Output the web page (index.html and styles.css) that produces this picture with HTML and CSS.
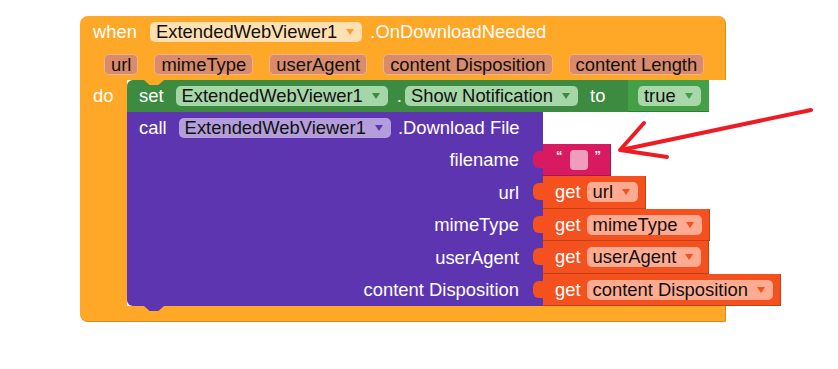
FILE: index.html
```html
<!DOCTYPE html>
<html lang="en">
<head>
  <meta charset="UTF-8">
  <meta name="viewport" content="width=device-width, initial-scale=1.0">
  <title>OnDownloadNeeded blocks</title>
  <link rel="stylesheet" href="styles.css">
</head>
<body>
  <div class="canvas">
    <div class="event">
      <div class="event-head">
        <div class="row">
          <span class="word">when</span>
          <span class="field field-event">ExtendedWebViewer1<i class="caret"></i></span>
          <span class="word">.OnDownloadNeeded</span>
        </div>
        <div class="row params">
          <span class="param">url</span>
          <span class="param">mimeType</span>
          <span class="param">userAgent</span>
          <span class="param">content Disposition</span>
          <span class="param">content Length</span>
        </div>
      </div>

      <div class="event-body">
        <div class="do-col"><span class="word">do</span></div>
        <div class="stack">
          <div class="set-row">
            <div class="set">
              <span class="word kw">set</span>
              <span class="field field-set">ExtendedWebViewer1<i class="caret"></i></span>
              <span class="word dot">.</span>
              <span class="field field-set">Show Notification<i class="caret"></i></span>
              <span class="word to">to</span>
            </div>
            <div class="logic">
              <span class="field field-logic">true<i class="caret"></i></span>
            </div>
          </div>

          <div class="call-row">
            <div class="call">
              <div class="call-head">
                <span class="word kw">call</span>
                <span class="field field-call">ExtendedWebViewer1<i class="caret"></i></span>
                <span class="word">.Download File</span>
              </div>
              <div class="slot">filename</div>
              <div class="slot tall">url</div>
              <div class="slot">mimeType</div>
              <div class="slot tall">userAgent</div>
              <div class="slot">content Disposition</div>
            </div>
            <div class="inputs">
              <div class="plug text-block">
                <span class="quote">&ldquo;</span><span class="blank"></span><span class="quote">&rdquo;</span>
              </div>
              <div class="plug get tall">
                <span class="word">get</span>
                <span class="field field-get">url<i class="caret"></i></span>
              </div>
              <div class="plug get">
                <span class="word">get</span>
                <span class="field field-get">mimeType<i class="caret"></i></span>
              </div>
              <div class="plug get tall">
                <span class="word">get</span>
                <span class="field field-get">userAgent<i class="caret"></i></span>
              </div>
              <div class="plug get">
                <span class="word">get</span>
                <span class="field field-get">content Disposition<i class="caret"></i></span>
              </div>
            </div>
          </div>
        </div>
      </div>

      <div class="event-foot"></div>
    </div>

    <!-- hand drawn pointer over the empty text block -->
    <svg class="arrow" width="838" height="369" viewBox="0 0 838 369">
      <g fill="none" stroke="#ed1c24" stroke-width="4" stroke-linecap="round" stroke-linejoin="round">
        <path d="M811 110 L621 150"/>
        <path d="M644 123 L620 150 L667 157"/>
      </g>
    </svg>
  </div>
</body>
</html>
```

FILE: styles.css
```css
* {
  box-sizing: border-box;
}

body {
  margin: 0;
  background: #fff;
  font-family: "Liberation Sans", Arial, sans-serif;
  font-size: 18.4px;
  color: #fff;
}

.canvas {
  position: relative;
  width: 838px;
  height: 369px;
  padding: 16px 0 0 80px;
}

.word {
  white-space: nowrap;
  line-height: 20px;
}

/* dropdown fields */
.field {
  display: inline-flex;
  align-items: center;
  height: 20px;
  padding: 0 8px 0 6px;
  border-radius: 5px;
  color: #111;
  white-space: nowrap;
  line-height: 20px;
}

.caret {
  display: inline-block;
  margin-left: 9px;
  width: 0;
  height: 0;
  border-left: 4px solid transparent;
  border-right: 4px solid transparent;
  border-top: 6px solid currentColor;
}

.field-event { background: #ffe0b2; }
.field-event .caret { color: #f7a030; }
.field-set { background: #a5d6a7; }
.field-set .caret { color: #3d8b40; }
.field-logic { background: #a8d8a9; }
.field-logic .caret { color: #43a047; }
.field-call { background: #b39ddb; }
.field-call .caret { color: #5e35b1; }
.field-get { background: #ffab91; }
.field-get .caret { color: #f4511e; }

/* event block */
.event-head {
  width: 646px;
  height: 64px;
  background: #ffa726;
  border-radius: 8px 8px 0 0;
  border-right: 1px solid #d98a1c;
}

.row {
  display: flex;
  align-items: center;
  height: 32px;
  padding-left: 13px;
}

.row .field-event {
  margin: 0 8px 0 13px;
}

.params {
  padding-left: 24px;
}

.param {
  height: 21px;
  margin-right: 16px;
  padding: 0 6px;
  border: 1px solid #f0b18e;
  border-radius: 5px;
  background: #d98b6b;
  color: #111;
  line-height: 19px;
  white-space: nowrap;
}

.event-body {
  display: flex;
}

.do-col {
  width: 47px;
  padding-left: 13px;
  background: #ffa726;
  line-height: 32px;
}

.do-col .word {
  line-height: 32px;
}

.event-foot {
  width: 646px;
  height: 16px;
  background: #ffa726;
  border-radius: 0 0 2px 8px;
  border-right: 1px solid #d98a1c;
  border-bottom: 1px solid #d98a1c;
}

.stack {
  display: flex;
  flex-direction: column;
}

/* set statement */
.set-row {
  display: flex;
  height: 32px;
}

.set {
  position: relative;
  z-index: 2;
  display: flex;
  align-items: center;
  width: 501px;
  padding-left: 12px;
  background: #3d8b40;
  border-radius: 6px 0 0 0;
}

.set::before,
.set::after,
.call::after {
  content: "";
  position: absolute;
  left: 17px;
  width: 20px;
  height: 5px;
  clip-path: polygon(0 0, 100% 0, 72% 100%, 28% 100%);
}

.set::before {
  top: 0;
  background: #ffa726;
}

.set::after {
  top: 100%;
  background: #3d8b40;
}

.set .kw {
  margin-right: 12px;
}

.set .dot {
  margin: 0 3px 0 9px;
}

.set .to {
  margin-left: 12px;
}

.logic {
  position: relative;
  display: flex;
  align-items: center;
  width: 81px;
  padding-left: 10px;
  background: #43a047;
  border-bottom: 1px solid #2f7d33;
}

.logic::before {
  content: "";
  position: absolute;
  left: -6px;
  top: 7px;
  width: 8px;
  height: 17px;
  border-left: 1px solid #8fc991;
  border-radius: 5px 0 0 5px;
  background: #43a047;
}

/* call statement */
.call-row {
  display: flex;
  align-items: flex-start;
}

.call {
  position: relative;
  z-index: 2;
  width: 416px;
  background: #5e35b1;
  border-radius: 0 0 0 6px;
}

.call::after {
  top: 100%;
  background: #5e35b1;
}

.call-head {
  display: flex;
  align-items: center;
  height: 32px;
  padding-left: 12px;
}

.call-head .kw {
  margin-right: 12px;
}

.call-head .field-call {
  margin-right: 7px;
}

.slot {
  display: flex;
  align-items: center;
  justify-content: flex-end;
  height: 32px;
  padding-right: 24px;
  white-space: nowrap;
}

.slot.tall,
.plug.tall {
  height: 33px;
}

/* plugged value blocks */
.inputs {
  display: flex;
  flex-direction: column;
  align-items: flex-start;
  padding-top: 32px;
}

.plug {
  position: relative;
  z-index: 3;
  display: flex;
  align-items: center;
  height: 32px;
  padding: 0 7px 0 12px;
  border-right: 1px solid rgba(0, 0, 0, 0.2);
  border-bottom: 1px solid rgba(0, 0, 0, 0.2);
}

.plug::before {
  content: "";
  position: absolute;
  left: -10px;
  top: 7px;
  width: 11px;
  height: 17px;
  border-radius: 6px 0 0 6px;
  background: inherit;
}

.get {
  background: #f4511e;
}

.get .word {
  margin-right: 6px;
}

.text-block {
  width: 68px;
  padding-left: 13px;
  background: #d81b60;
}

.quote {
  font-size: 13px;
  font-weight: bold;
  line-height: 14px;
  align-self: flex-start;
  margin-top: 5px;
}

.blank {
  width: 18px;
  height: 20px;
  margin: 0 7px;
  border-radius: 4px;
  background: #f19bbd;
}

.arrow {
  position: absolute;
  top: 0;
  left: 0;
  pointer-events: none;
}
```
